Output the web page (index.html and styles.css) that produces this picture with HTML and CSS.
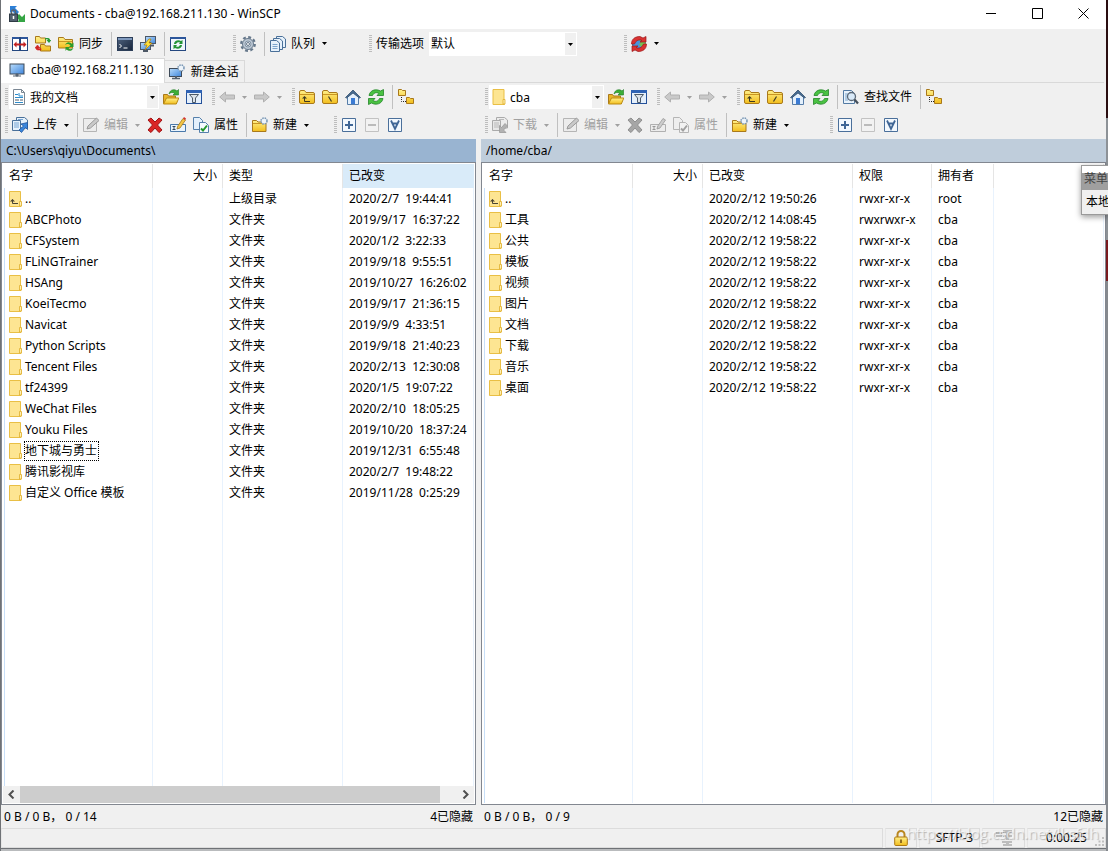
FILE: index.html
```html
<!DOCTYPE html>
<html lang="zh-CN">
<head>
<meta charset="utf-8">
<title>Documents - cba@192.168.211.130 - WinSCP</title>
<link rel="stylesheet" href="styles.css">
</head>
<body>
<svg class="defs" aria-hidden="true">
  <linearGradient id="gold" x1="0" y1="0" x2="0" y2="1"><stop offset="0" stop-color="#fff08a"/><stop offset="1" stop-color="#f2bd1c"/></linearGradient>
  <linearGradient id="screen" x1="0" y1="0" x2="1" y2="1"><stop offset="0" stop-color="#b9dcfb"/><stop offset="1" stop-color="#3f86dc"/></linearGradient>
  <linearGradient id="dark" x1="0" y1="0" x2="1" y2="1"><stop offset="0" stop-color="#50637f"/><stop offset="1" stop-color="#17243a"/></linearGradient>
  <symbol id="app" viewBox="0 0 16 16"><path d="M1 0h7L6 2l4 4-3 3-4-4-2 2z" fill="#2d7fd6"/><path d="M16 16H8l2-2-3-3 3-3 3 3 3-3z" fill="#35a545"/><path d="M2.500 8V6a2 2 0 0 1 4 0v2" fill="none" stroke="#59636e" stroke-width="1.500"/><rect x="0.500" y="8" width="8" height="7.500" fill="#52606f" stroke="#2f3a45"/><path d="M4.500 10v3" stroke="#fff" stroke-width="1.500"/></symbol>
  <symbol id="compare" viewBox="0 0 16 16"><rect x=".5" y="1.500" width="7" height="13" fill="#fff" stroke="#24477f"/><rect x="8.500" y="1.500" width="7" height="13" fill="#fff" stroke="#24477f"/><path d="M0 1h16v2H0z" fill="#2c569b"/><path d="M8 1v14" stroke="#24477f" stroke-width="2"/><path d="M1.500 8.500 4.500 5.500v2h7v-2L14.500 8.500 11.500 11.500V9.500h-7v2z" fill="#c22020"/></symbol>
  <symbol id="folder" viewBox="0 0 16 16"><path d="M.5 13V3q0-1.500 1.500-1.500h3.500l1.500 2h7q1.500 0 1.500 1.500v8q0 1.500-1.500 1.500H2q-1.500 0-1.500-1.500z" fill="url(#gold)" stroke="#a9791b"/><path d="M1 5.500h14" stroke="#c99523"/></symbol>
  <symbol id="syncdirs" viewBox="0 0 16 16"><path d="M.5 7V.5h4l1 1.500h5v5zM5.500 15V8.500h4L10.500 10h5v5z" fill="url(#gold)" stroke="#a9791b"/><path d="M10 2h3c1.500 0 2 1 2 2h1.500L14 7l-2.500-3H13c0-1-1-1-3-.5z" fill="#269a35"/><path d="M6 14H3c-1.500 0-2-1-2-2H0l2.500-3L5 12H3.500c0 1 1 1 2.500.5z" fill="#d02424" stroke="#d02424" stroke-width=".6"/></symbol>
  <symbol id="sync" viewBox="0 0 16 16"><path d="M.5 12V1.500h5l1.500 2h7.500V12z" fill="url(#gold)" stroke="#a9791b"/><path d="M1 5.500h13" stroke="#c99523"/><path d="M7 9c2-4 5-3 7-1l1.500-1.500V11H11l1.500-1.500C11 8 9 7.500 7 9zM15.500 12c-2 4-5 3-7 1.500L7.500 15v-4H12l-1.500 1.500c1.500 1 3 .8 5-.5z" fill="#2b9c2b"/></symbol>
  <symbol id="console" viewBox="0 0 16 16"><rect x=".5" y="1.500" width="15" height="13" fill="url(#dark)" stroke="#2c3e59"/><path d="M1 3h14" stroke="#7f99bd" stroke-width="2"/><path d="m2.500 8 2 2-2 2M6.500 12h4" fill="none" stroke="#fff"/></symbol>
  <symbol id="putty" viewBox="0 0 16 16"><rect x="5.500" y=".5" width="10" height="7" fill="url(#screen)" stroke="#4d5866"/><rect x=".5" y="6.500" width="10" height="7" fill="url(#screen)" stroke="#4d5866"/><path d="M3 15h5M10 9.500h4" stroke="#4d5866" stroke-width="2"/><path d="m9 3-5 6h3l-2 5 7-7H9l2-4z" fill="#ffe13b" stroke="#a97b10" stroke-width=".7"/></symbol>
  <symbol id="winsync" viewBox="0 0 16 16"><rect x=".5" y="1.500" width="15" height="13" fill="#eef5fd" stroke="#24477f"/><path d="M0 1h16v2H0z" fill="#2c569b"/><path d="M4 8c0-3 4-5 7-3l1.500-1v4H9l1-1.500C8.500 6 7 6 6 8zM12 9c0 3-4 5-7 3l-1.500 1V9H7l-1 1.500c1.500.5 3 .5 4-1.500z" fill="#249437"/></symbol>
  <symbol id="gear" viewBox="0 0 16 16"><circle cx="8" cy="8" r="6.800" fill="none" stroke="#66788b" stroke-width="2.200" stroke-dasharray="2.900 2.440"/><circle cx="8" cy="8" r="5.500" fill="#bcc8d4" stroke="#66788b"/><circle cx="8" cy="8" r="3" fill="#dfe6ed" stroke="#8494a5"/><circle cx="8" cy="8" r="1.500" fill="#fff" stroke="#66788b"/></symbol>
  <symbol id="queue" viewBox="0 0 16 16"><g fill="#e6f1fb" stroke="#4a7099"><path d="M6.500.5h6l3 2.500v8.500h-9z"/><path d="M3.500 2.500h6l3 2.500v8.500h-9z"/><path d="M.5 4.500h6l3 2.500v8.500h-9z"/></g><path d="M2.500 8.500h5M2.500 10.500h5M2.500 12.500h5" stroke="#7ca4cc"/></symbol>
  <symbol id="globe" viewBox="0 0 16 16"><circle cx="8" cy="8" r="6.500" fill="#4a94dc" stroke="#386595"/><path d="m6 5 4 0-2 4 4 3 3-5-3-3z" fill="#74bf54"/><path d="M.5 8C.5 3 4 .5 9 .5l3 1.500L15 .5V6H9l2-1.500C8 3 5 4.500 3.500 8z" fill="#d93232" stroke="#9c1818" stroke-width=".7"/><path d="M15.500 8c0 5-3.500 7.500-8.500 7.500L4 14l-3 1.500V10h6l-2 1.500c3 1.500 6 0 7.500-3.500z" fill="#d93232" stroke="#9c1818" stroke-width=".7"/></symbol>
  <symbol id="monitor" viewBox="0 0 16 16"><rect x="1" y="2" width="14" height="10" fill="url(#screen)" stroke="#3f4b59"/><path d="M7 12h2v2H7zM4 14h8" fill="#566270" stroke="#566270"/></symbol>
  <symbol id="newsession" viewBox="0 0 16 16"><rect x=".5" y="4.500" width="12" height="8" fill="url(#screen)" stroke="#3f4b59"/><path d="M6 13h2M3 14.500h8" stroke="#566270" stroke-width="1.500"/><circle cx="12" cy="4" r="3" fill="#eef4fa" stroke="#7896b4" stroke-width="1.500" stroke-dasharray="1.500 .9"/></symbol>
  <symbol id="docs" viewBox="0 0 16 16"><path d="M2.500.5h8l3 3v12h-11z" fill="#fff" stroke="#7b8793"/><path d="M10.500.5v3h3" fill="none" stroke="#7b8793"/><path d="M4 5.500h3M8 4v3h4M4 8.500h8M4 13.500h8" fill="none" stroke="#2d8ccc"/><path d="M4 11h4M9 11h3" stroke="#4a5a68"/></symbol>
  <symbol id="open" viewBox="0 0 16 16"><path d="M.5 14.500v-9h4l1 1.500h7v7.500z" fill="#e9b52a" stroke="#a9791b"/><path d="M.5 15 3.500 9h12.300l-2.500 6z" fill="url(#gold)" stroke="#b98912"/><path d="M6 5c1-5 6-5 8-3l1.500-1.500V6H10l1.500-1.500C10 3 8 3 6 5z" fill="#3cae37" stroke="#1d7b22" stroke-width=".6"/></symbol>
  <symbol id="filter" viewBox="0 0 16 16"><rect x=".5" y="1.500" width="15" height="13" fill="#e4effb" stroke="#24519a"/><path d="M0 1h16v3H0z" fill="#2e62b4"/><path d="M3.500 5.500h9L9.500 9v4.500h-3V9z" fill="#dbe2e9" stroke="#4c5a69"/></symbol>
  <symbol id="back" viewBox="0 0 16 16"><path d="M.7 8 6.500 3v3h9v4h-9v3z" fill="#c9c9c9" stroke="#b0b0b0"/></symbol>
  <symbol id="forward" viewBox="0 0 16 16"><path d="M15.300 8 9.500 3v3h-9v4h9v3z" fill="#c9c9c9" stroke="#b0b0b0"/></symbol>
  <symbol id="up" viewBox="0 0 16 16"><use href="#folder"/><path d="M5.500 8v4.500H11" fill="none" stroke="#3c3823"/><path d="M3 9.500 5.500 7 8 9.500z" fill="#3c3823"/></symbol>
  <symbol id="rootwin" viewBox="0 0 16 16"><use href="#folder"/><path d="m6.500 7.500 3 5" stroke="#3c3823" stroke-width="1.200"/></symbol>
  <symbol id="rootunix" viewBox="0 0 16 16"><use href="#folder"/><path d="m9.500 7.500-3 5" stroke="#3c3823" stroke-width="1.200"/></symbol>
  <symbol id="home" viewBox="0 0 16 16"><path d="M2.500 8v7.500h11V8L8 2.500z" fill="#e4f0fc" stroke="#567da8"/><path d="M.5 8.500 8 1l7.500 7.500-1 .5L8 4 1.500 9z" fill="#476b91" stroke="#34516f" stroke-width=".8"/><path d="M6 9h4v6H6z" fill="#3b7bd3"/></symbol>
  <symbol id="refresh" viewBox="0 0 16 16"><path d="M1 6.500C2 1 8-.5 12.500 2L15.500.5v6H9l2-2C8.500 3 6 3.500 4.500 6.500zM15 9.500c-1 5.500-7 7-11.500 4.500l-3 1.500v-6H7l-2 2c2.500 1.500 5 1 6.500-2z" fill="#4ac242" stroke="#23842a" stroke-width=".8"/></symbol>
  <symbol id="tree" viewBox="0 0 16 16"><path d="M.5 6.500v-6h3l1 1h3v5zM8.500 14.500v-6h3l1 1h3v5z" fill="url(#gold)" stroke="#a9791b"/><path d="M3.500 8v4.500H8" fill="none" stroke="#222" stroke-dasharray="1 1"/></symbol>
  <symbol id="upload" viewBox="0 0 16 16"><path d="M4.500.5h8l3 2.500v8h-11z" fill="#e6f1fb" stroke="#4a7099"/><path d="M.5 3.500h8v10h-8z" fill="#e6f1fb" stroke="#4a7099"/><path d="M2 6h5M2 8h5M2 10h5M6 2.500h5" stroke="#76a4d2"/><path d="M15.500 5.500v7l-2-2-4 5-2.500-2.500 4.500-4-2.500-2z" fill="#3a86dc" stroke="#1f539b" stroke-width=".8"/></symbol>
  <symbol id="download" viewBox="0 0 16 16"><path d="M4.500.5h8l3 2.500v8h-11z" fill="#ececec" stroke="#aaa"/><path d="M.5 3.500h8v10h-8z" fill="#e7e7e7" stroke="#aaa"/><path d="M2 6h5M2 8h5M2 10h5M7 2.500h5" stroke="#b9b9b9"/><path d="M7.500 15.500v-7l2 2L13 6.500 15.500 9l-4 4 2.500 2.500z" fill="#b2b2b2" stroke="#999" stroke-width=".8"/></symbol>
  <symbol id="edit" viewBox="0 0 16 16"><path d="M.5 1.500h13v13H.5z" fill="#ececec" stroke="#b5b5b5"/><path d="m4 12 1-3 8.500-8L16 3.500 7.500 11z" fill="#c9c9c9" stroke="#999"/></symbol>
  <symbol id="delete" viewBox="0 0 16 16"><path d="M4 1 8 5l4-4 3 2-4.500 5 4.500 5-3 2.500-4-4.500-4 4.500L1 13l4.500-5L1 3z" fill="#d92626" stroke="#a11313"/></symbol>
  <symbol id="deleteoff" viewBox="0 0 16 16"><path d="M4 1 8 5l4-4 3 2-4.500 5 4.500 5-3 2.500-4-4.500-4 4.500L1 13l4.500-5L1 3z" fill="#a6a6a6" stroke="#8f8f8f"/></symbol>
  <symbol id="rename" viewBox="0 0 16 16"><path d="M.5 7.500h15v7H.5z" fill="#eaf4fd" stroke="#4a79aa"/><path d="M2.500 9.500h3M2.500 12.500h3M4 9.500v3" stroke="#33475c"/><path d="m7 12 .8-3L13 1.500l2.500 1.500L10 11z" fill="#f4c545" stroke="#a3781d" stroke-width=".8"/><path d="M13 1.500 14 0l2 1.500-.8 1.500z" fill="#d43232"/></symbol>
  <symbol id="renameoff" viewBox="0 0 16 16"><path d="M.5 7.500h15v7H.5z" fill="#ececec" stroke="#b0b0b0"/><path d="M2.500 9.500h3M2.500 12.500h3M4 9.500v3" stroke="#999"/><path d="m7 12 .8-3L13 1.500l2.500 1.500L10 11z" fill="#ccc" stroke="#999" stroke-width=".8"/></symbol>
  <symbol id="props" viewBox="0 0 16 16"><path d="M.5.5h6l3 3v9h-9z" fill="#e4f0fb" stroke="#5580ab"/><path d="M6.500 5.500h6l3 3v7h-9z" fill="#f5faff" stroke="#5580ab"/><path d="m8 11.500 2 2 4-5" fill="none" stroke="#23962b" stroke-width="2"/></symbol>
  <symbol id="propsoff" viewBox="0 0 16 16"><path d="M.5.5h6l3 3v9h-9z" fill="#eee" stroke="#b5b5b5"/><path d="M6.500 5.500h6l3 3v7h-9z" fill="#f2f2f2" stroke="#b5b5b5"/><path d="m8 11.500 2 2 4-5" fill="none" stroke="#a0a0a0" stroke-width="2"/></symbol>
  <symbol id="newdir" viewBox="0 0 16 16"><path d="M.5 14.500v-11h4L6 5h8v9.500z" fill="url(#gold)" stroke="#a9791b"/><path d="M1 6.500h12.500" stroke="#c99523"/><circle cx="12" cy="4" r="3" fill="#eef4fa" stroke="#7896b4" stroke-width="1.500" stroke-dasharray="1.500 .9"/></symbol>
  <symbol id="plus" viewBox="0 0 16 16"><path d="M1.500 1.500h13v13h-13z" fill="#f2f8fe" stroke="#4a6f9a"/><path d="M4 8h8M8 4v8" stroke="#3f6696" stroke-width="2"/></symbol>
  <symbol id="minus" viewBox="0 0 16 16"><path d="M1.500 1.500h13v13h-13z" fill="#f2f2f2" stroke="#c2c2c2"/><path d="M4 8h8" stroke="#bbb" stroke-width="2"/></symbol>
  <symbol id="invert" viewBox="0 0 16 16"><path d="M1.500 1.500h13v13h-13z" fill="#f2f8fe" stroke="#4a6f9a"/><path d="M4 3.500l4 8.500 4-8.500M5 6.500h6" fill="none" stroke="#3f6696" stroke-width="1.800"/></symbol>
  <symbol id="find" viewBox="0 0 16 16"><path d="M.5 1.500h8l3 3v10H.5z" fill="#e8f2fb" stroke="#527aa3"/><path d="M2 5h3M2 7h2M2 9h2M2 11h3" stroke="#7ba5cd"/><circle cx="8.500" cy="7.500" r="4" fill="#d8e9f8" stroke="#5a6876" stroke-width="1.300"/><path d="m11.500 10.500 3.500 4" stroke="#454f5a" stroke-width="2.200"/></symbol>
  <symbol id="dir" viewBox="0 0 13 16"><path d="M.5.5h11V11l.5.5v4H.5z" fill="#fde592" stroke="#e9bf45"/><path d="M10.500 15v-4.500h2V15z" fill="#fff0b4" stroke="#e0ae2c" stroke-width=".8"/></symbol>
  <symbol id="dirup" viewBox="0 0 13 16"><use href="#dir"/><path d="M3.500 8.500v4H9" fill="none" stroke="#4a4432"/><path d="M1 10.500 3.500 8 6 10.500z" fill="#4a4432"/></symbol>
  <symbol id="lock" viewBox="0 0 14 16"><path d="M3.500 8V4.500a3.500 3.500 0 0 1 7 0V8" fill="none" stroke="#b98720" stroke-width="2"/><rect x=".7" y="7" width="12.600" height="8.500" rx="1" fill="url(#gold)" stroke="#ad7914"/><path d="M7 9.500v3.500" stroke="#6c4910" stroke-width="1.500"/></symbol>
  <symbol id="zip" viewBox="0 0 16 16"><path d="M0 2h6v2H0zM0 5h6v2H0zM7 0h9v3h-3v2h3v2h-3v3h-3V7H7V5h3V3H7zM6 11h10v2h-3v1h3v2H7v-2h3v-1H6z" fill="#bdbdbd"/></symbol>
  <symbol id="caret" viewBox="0 0 5 3"><path d="M0 0h5L2.500 3z" fill="currentColor"/></symbol>
</svg>

<div class="window">
  <header class="titlebar">
    <svg class="ico"><use href="#app"/></svg>
    <h1 class="title">Documents - cba@192.168.211.130 - WinSCP</h1>
    <button class="winbtn" aria-label="最小化"><svg viewBox="0 0 11 11"><path d="M0 5.500h10"/></svg></button>
    <button class="winbtn" aria-label="最大化"><svg viewBox="0 0 11 11"><path d="M.5.5h10v10H.5z"/></svg></button>
    <button class="winbtn" aria-label="关闭"><svg viewBox="0 0 11 11"><path d="m.5.5 10 10M10.500.5l-10 10"/></svg></button>
  </header>

  <div class="toolbar main-tools">
    <div class="group">
      <span class="grip"></span>
      <button class="tool" aria-label="比较目录"><svg class="ico"><use href="#compare"/></svg></button>
      <button class="tool" aria-label="同步浏览"><svg class="ico"><use href="#syncdirs"/></svg></button>
      <button class="tool"><svg class="ico"><use href="#sync"/></svg>同步</button>
      <span class="sep"></span>
      <button class="tool" aria-label="终端"><svg class="ico"><use href="#console"/></svg></button>
      <button class="tool" aria-label="PuTTY"><svg class="ico"><use href="#putty"/></svg></button>
      <span class="sep"></span>
      <button class="tool" aria-label="保持更新"><svg class="ico"><use href="#winsync"/></svg></button>
    </div>
    <div class="group">
      <span class="grip"></span>
      <button class="tool" aria-label="选项"><svg class="ico"><use href="#gear"/></svg></button>
      <span class="sep"></span>
      <button class="tool"><svg class="ico"><use href="#queue"/></svg>队列<svg class="caret"><use href="#caret"/></svg></button>
    </div>
    <div class="group">
      <span class="grip"></span>
      <label class="tool-label" for="preset">传输选项</label>
      <span class="combo combo-preset"><select id="preset"><option>默认</option></select><svg class="caret"><use href="#caret"/></svg></span>
    </div>
    <div class="group">
      <span class="grip"></span>
      <button class="tool" aria-label="重新连接"><svg class="ico"><use href="#globe"/></svg><svg class="caret"><use href="#caret"/></svg></button>
    </div>
  </div>

  <nav class="tabs">
    <button class="tab active"><svg class="ico"><use href="#monitor"/></svg>cba@192.168.211.130</button>
    <button class="tab"><svg class="ico"><use href="#newsession"/></svg>新建会话</button>
  </nav>

  <div class="panes">
    <section class="pane">
      <div class="toolbar nav-tools local-nav">
        <div class="group">
          <span class="grip"></span>
          <span class="combo combo-dir"><svg class="ico"><use href="#docs"/></svg><select aria-label="本地目录"><option>我的文档</option></select><svg class="caret"><use href="#caret"/></svg></span>
          <button class="tool" aria-label="打开目录"><svg class="ico"><use href="#open"/></svg></button>
          <button class="tool" aria-label="过滤"><svg class="ico"><use href="#filter"/></svg></button>
        </div>
        <div class="group">
          <span class="grip"></span>
          <button class="tool" disabled aria-label="后退"><svg class="ico"><use href="#back"/></svg><svg class="caret"><use href="#caret"/></svg></button>
          <button class="tool" disabled aria-label="前进"><svg class="ico"><use href="#forward"/></svg><svg class="caret"><use href="#caret"/></svg></button>
        </div>
        <div class="group">
          <span class="grip"></span>
          <button class="tool" aria-label="上级目录"><svg class="ico"><use href="#up"/></svg></button>
          <button class="tool" aria-label="根目录"><svg class="ico"><use href="#rootwin"/></svg></button>
          <button class="tool" aria-label="主目录"><svg class="ico"><use href="#home"/></svg></button>
          <button class="tool" aria-label="刷新"><svg class="ico"><use href="#refresh"/></svg></button>
          <span class="sep"></span>
          <button class="tool" aria-label="目录树"><svg class="ico"><use href="#tree"/></svg></button>
        </div>
      </div>
      <div class="toolbar file-tools local-file">
        <div class="group">
          <span class="grip"></span>
          <button class="tool"><svg class="ico"><use href="#upload"/></svg>上传<svg class="caret"><use href="#caret"/></svg></button>
          <span class="sep"></span>
          <button class="tool" disabled><svg class="ico"><use href="#edit"/></svg>编辑<svg class="caret"><use href="#caret"/></svg></button>
          <button class="tool" aria-label="删除"><svg class="ico"><use href="#delete"/></svg></button>
          <button class="tool" aria-label="重命名"><svg class="ico"><use href="#rename"/></svg></button>
          <button class="tool"><svg class="ico"><use href="#props"/></svg>属性</button>
          <span class="sep"></span>
          <button class="tool"><svg class="ico"><use href="#newdir"/></svg>新建<svg class="caret"><use href="#caret"/></svg></button>
        </div>
        <div class="group">
          <span class="grip"></span>
          <button class="tool" aria-label="选择文件"><svg class="ico"><use href="#plus"/></svg></button>
          <button class="tool" disabled aria-label="取消选择"><svg class="ico"><use href="#minus"/></svg></button>
          <button class="tool" aria-label="反向选择"><svg class="ico"><use href="#invert"/></svg></button>
        </div>
      </div>
      <div class="path active">C:\Users\qiyu\Documents\</div>
      <div class="list">
        <div class="list-body">
          <table class="files">
            <colgroup><col class="w-name-l"><col class="w-size"><col class="w-type"><col class="w-date-l"></colgroup>
            <thead><tr><th>名字</th><th class="num">大小</th><th>类型</th><th class="sorted">已改变</th></tr></thead>
            <tbody>
              <tr><td><span class="name"><svg class="dir"><use href="#dirup"/></svg>..</span></td><td></td><td>上级目录</td><td>2020/2/7&nbsp; 19:44:41</td></tr>
              <tr><td><span class="name"><svg class="dir"><use href="#dir"/></svg>ABCPhoto</span></td><td></td><td>文件夹</td><td>2019/9/17&nbsp; 16:37:22</td></tr>
              <tr><td><span class="name"><svg class="dir"><use href="#dir"/></svg>CFSystem</span></td><td></td><td>文件夹</td><td>2020/1/2&nbsp; 3:22:33</td></tr>
              <tr><td><span class="name"><svg class="dir"><use href="#dir"/></svg>FLiNGTrainer</span></td><td></td><td>文件夹</td><td>2019/9/18&nbsp; 9:55:51</td></tr>
              <tr><td><span class="name"><svg class="dir"><use href="#dir"/></svg>HSAng</span></td><td></td><td>文件夹</td><td>2019/10/27&nbsp; 16:26:02</td></tr>
              <tr><td><span class="name"><svg class="dir"><use href="#dir"/></svg>KoeiTecmo</span></td><td></td><td>文件夹</td><td>2019/9/17&nbsp; 21:36:15</td></tr>
              <tr><td><span class="name"><svg class="dir"><use href="#dir"/></svg>Navicat</span></td><td></td><td>文件夹</td><td>2019/9/9&nbsp; 4:33:51</td></tr>
              <tr><td><span class="name"><svg class="dir"><use href="#dir"/></svg>Python Scripts</span></td><td></td><td>文件夹</td><td>2019/9/18&nbsp; 21:40:23</td></tr>
              <tr><td><span class="name"><svg class="dir"><use href="#dir"/></svg>Tencent Files</span></td><td></td><td>文件夹</td><td>2020/2/13&nbsp; 12:30:08</td></tr>
              <tr><td><span class="name"><svg class="dir"><use href="#dir"/></svg>tf24399</span></td><td></td><td>文件夹</td><td>2020/1/5&nbsp; 19:07:22</td></tr>
              <tr><td><span class="name"><svg class="dir"><use href="#dir"/></svg>WeChat Files</span></td><td></td><td>文件夹</td><td>2020/2/10&nbsp; 18:05:25</td></tr>
              <tr><td><span class="name"><svg class="dir"><use href="#dir"/></svg>Youku Files</span></td><td></td><td>文件夹</td><td>2019/10/20&nbsp; 18:37:24</td></tr>
              <tr><td><span class="name"><svg class="dir"><use href="#dir"/></svg><span class="focus">地下城与勇士</span></span></td><td></td><td>文件夹</td><td>2019/12/31&nbsp; 6:55:48</td></tr>
              <tr><td><span class="name"><svg class="dir"><use href="#dir"/></svg>腾讯影视库</span></td><td></td><td>文件夹</td><td>2020/2/7&nbsp; 19:48:22</td></tr>
              <tr><td><span class="name"><svg class="dir"><use href="#dir"/></svg>自定义 Office 模板</span></td><td></td><td>文件夹</td><td>2019/11/28&nbsp; 0:25:29</td></tr>
              <tr class="fill"><td></td><td></td><td></td><td></td></tr>
            </tbody>
          </table>
        </div>
        <div class="scrollbar">
          <button class="scroll-btn" aria-label="向左滚动"><svg viewBox="0 0 7 9"><path d="M5.500.5l-4 4 4 4"/></svg></button>
          <div class="track"><div class="thumb"></div></div>
          <button class="scroll-btn" aria-label="向右滚动"><svg viewBox="0 0 7 9"><path d="M1.500.5l4 4-4 4"/></svg></button>
        </div>
      </div>
      <div class="summary"><span>0 B / 0 B，&nbsp;0 / 14</span><span>4已隐藏</span></div>
    </section>

    <section class="pane">
      <div class="toolbar nav-tools remote-nav">
        <div class="group">
          <span class="grip"></span>
          <span class="combo combo-remote"><svg class="ico"><use href="#dir"/></svg><select aria-label="远程目录"><option>cba</option></select><svg class="caret"><use href="#caret"/></svg></span>
          <button class="tool" aria-label="打开目录"><svg class="ico"><use href="#open"/></svg></button>
          <button class="tool" aria-label="过滤"><svg class="ico"><use href="#filter"/></svg></button>
        </div>
        <div class="group">
          <span class="grip"></span>
          <button class="tool" disabled aria-label="后退"><svg class="ico"><use href="#back"/></svg><svg class="caret"><use href="#caret"/></svg></button>
          <button class="tool" disabled aria-label="前进"><svg class="ico"><use href="#forward"/></svg><svg class="caret"><use href="#caret"/></svg></button>
        </div>
        <div class="group">
          <span class="grip"></span>
          <button class="tool" aria-label="上级目录"><svg class="ico"><use href="#up"/></svg></button>
          <button class="tool" aria-label="根目录"><svg class="ico"><use href="#rootunix"/></svg></button>
          <button class="tool" aria-label="主目录"><svg class="ico"><use href="#home"/></svg></button>
          <button class="tool" aria-label="刷新"><svg class="ico"><use href="#refresh"/></svg></button>
          <span class="sep"></span>
          <button class="tool"><svg class="ico"><use href="#find"/></svg>查找文件</button>
          <span class="sep"></span>
          <button class="tool" aria-label="目录树"><svg class="ico"><use href="#tree"/></svg></button>
        </div>
      </div>
      <div class="toolbar file-tools remote-file">
        <div class="group">
          <span class="grip"></span>
          <button class="tool" disabled><svg class="ico"><use href="#download"/></svg>下载<svg class="caret"><use href="#caret"/></svg></button>
          <span class="sep"></span>
          <button class="tool" disabled><svg class="ico"><use href="#edit"/></svg>编辑<svg class="caret"><use href="#caret"/></svg></button>
          <button class="tool" disabled aria-label="删除"><svg class="ico"><use href="#deleteoff"/></svg></button>
          <button class="tool" disabled aria-label="重命名"><svg class="ico"><use href="#renameoff"/></svg></button>
          <button class="tool" disabled><svg class="ico"><use href="#propsoff"/></svg>属性</button>
          <span class="sep"></span>
          <button class="tool"><svg class="ico"><use href="#newdir"/></svg>新建<svg class="caret"><use href="#caret"/></svg></button>
        </div>
        <div class="group">
          <span class="grip"></span>
          <button class="tool" aria-label="选择文件"><svg class="ico"><use href="#plus"/></svg></button>
          <button class="tool" disabled aria-label="取消选择"><svg class="ico"><use href="#minus"/></svg></button>
          <button class="tool" aria-label="反向选择"><svg class="ico"><use href="#invert"/></svg></button>
        </div>
      </div>
      <div class="path">/home/cba/</div>
      <div class="list">
        <div class="list-body">
          <table class="files">
            <colgroup><col class="w-name-r"><col class="w-size"><col class="w-date-r"><col class="w-rights"><col class="w-owner"><col></colgroup>
            <thead><tr><th>名字</th><th class="num">大小</th><th>已改变</th><th>权限</th><th>拥有者</th><th></th></tr></thead>
            <tbody>
              <tr><td><span class="name"><svg class="dir"><use href="#dirup"/></svg>..</span></td><td></td><td>2020/2/12 19:50:26</td><td>rwxr-xr-x</td><td>root</td><td></td></tr>
              <tr><td><span class="name"><svg class="dir"><use href="#dir"/></svg>工具</span></td><td></td><td>2020/2/12 14:08:45</td><td>rwxrwxr-x</td><td>cba</td><td></td></tr>
              <tr><td><span class="name"><svg class="dir"><use href="#dir"/></svg>公共</span></td><td></td><td>2020/2/12 19:58:22</td><td>rwxr-xr-x</td><td>cba</td><td></td></tr>
              <tr><td><span class="name"><svg class="dir"><use href="#dir"/></svg>模板</span></td><td></td><td>2020/2/12 19:58:22</td><td>rwxr-xr-x</td><td>cba</td><td></td></tr>
              <tr><td><span class="name"><svg class="dir"><use href="#dir"/></svg>视频</span></td><td></td><td>2020/2/12 19:58:22</td><td>rwxr-xr-x</td><td>cba</td><td></td></tr>
              <tr><td><span class="name"><svg class="dir"><use href="#dir"/></svg>图片</span></td><td></td><td>2020/2/12 19:58:22</td><td>rwxr-xr-x</td><td>cba</td><td></td></tr>
              <tr><td><span class="name"><svg class="dir"><use href="#dir"/></svg>文档</span></td><td></td><td>2020/2/12 19:58:22</td><td>rwxr-xr-x</td><td>cba</td><td></td></tr>
              <tr><td><span class="name"><svg class="dir"><use href="#dir"/></svg>下载</span></td><td></td><td>2020/2/12 19:58:22</td><td>rwxr-xr-x</td><td>cba</td><td></td></tr>
              <tr><td><span class="name"><svg class="dir"><use href="#dir"/></svg>音乐</span></td><td></td><td>2020/2/12 19:58:22</td><td>rwxr-xr-x</td><td>cba</td><td></td></tr>
              <tr><td><span class="name"><svg class="dir"><use href="#dir"/></svg>桌面</span></td><td></td><td>2020/2/12 19:58:22</td><td>rwxr-xr-x</td><td>cba</td><td></td></tr>
              <tr class="fill"><td></td><td></td><td></td><td></td><td></td><td></td></tr>
            </tbody>
          </table>
        </div>
      </div>
      <div class="summary"><span>0 B / 0 B，&nbsp;0 / 9</span><span>12已隐藏</span></div>
    </section>
  </div>

  <footer class="statusbar">
    <span class="cell"></span>
    <span class="cell"><svg class="lock"><use href="#lock"/></svg></span>
    <span class="cell">SFTP-3</span>
    <span class="cell"><svg class="ico"><use href="#zip"/></svg></span>
    <span class="cell">0:00:25</span>
  </footer>
  <div class="watermark">https://blog.csdn.net/lksfdh</div>
  <svg class="resize" viewBox="0 0 9 9"><path d="M7 0h2v2H7zM7 3.500h2v2H7zM7 7h2v2H7zM3.500 3.500h2v2h-2zM3.500 7h2v2h-2zM0 7h2v2H0z"/></svg>
</div>
<aside class="popup"><div class="popup-title">菜单</div><div class="popup-item">本地</div></aside>
</body>
</html>
```
FILE: styles.css
```css
* { box-sizing: border-box; }

body {
  margin: 0;
  height: 100vh;
  padding: 0 2px 2px 1px;
  overflow: hidden;
  position: relative;
  background:
    linear-gradient(#2a0d10 0 118px, #8d9297 118px 240px, #7a1a20 240px 281px, #85898e 281px) right / 2px 100% no-repeat,
    linear-gradient(90deg, #6f7276 0 1px, #b9bbbd 1px);
  font: 12px/16px "Noto Sans", "Noto Sans CJK SC", sans-serif;
  color: #000;
}

button, select { font: inherit; color: inherit; border: 0; background: none; padding: 0; margin: 0; border-radius: 0; }
.defs { position: absolute; width: 0; height: 0; }
.ico { width: 16px; height: 16px; flex: none; }
.caret { width: 5px; height: 3px; flex: none; }

.window { height: 100%; display: flex; flex-direction: column; background: #f0f0f0; position: relative; border-bottom: 1px solid #6f7276; }

.titlebar { display: flex; align-items: center; height: 29px; padding-left: 8px; background: #fff; flex: none; padding-bottom: 2px; }
.title { flex: 1; margin: 0 0 0 5px; font-size: 12px; font-weight: normal; }
.winbtn { width: 46px; height: 27px; display: grid; place-items: center; }
.winbtn svg { width: 11px; height: 11px; fill: none; stroke: #000; }

.toolbar { display: grid; flex: none; height: 28px; padding-left: 4px; align-items: stretch; }
.group { display: flex; align-items: center; }
.grip { width: 3px; height: 18px; margin-right: 1px; background: repeating-linear-gradient(#bdbdbd 0 1px, #f0f0f0 1px 2px); }
.sep { width: 1px; height: 24px; margin: 0 2px 0 4px; background: #c0c0c0; }
.tool { display: flex; align-items: center; gap: 5px; height: 24px; padding: 0 4px 0 3px; white-space: nowrap; }
.tool .caret { margin-left: 2px; }
.tool:disabled { color: #a0a0a0; }
.tool-label { padding: 0 5px 0 3px; }
.combo { display: flex; align-items: center; background: #fff; height: 24px; flex: none; }
.combo .ico { margin-left: 2px; }
.combo select { appearance: none; flex: 1; align-self: stretch; min-width: 0; padding: 1px 0 0 3px; }
.combo .caret { box-sizing: content-box; padding: 10px 3px 9px; background: #f0f0f0; margin-right: 1px; }
.combo-preset { width: 148px; }
.combo-preset select { padding: 0 0 0 2px; }
.combo-dir { width: 150px; margin-right: 1px; }
.combo-remote { width: 115px; margin-right: 1px; }

.main-tools { height: 29px; grid-template-columns: 228px 136px 255px 1fr; }
.local-nav { grid-template-columns: 207px 80px 1fr; }
.remote-nav { grid-template-columns: 172px 80px 1fr; }
.local-file { grid-template-columns: 329px 1fr; }
.remote-file { grid-template-columns: 345px 1fr; }

.tabs { display: flex; align-items: flex-end; flex: none; height: 25px; }
.tabs::after { content: ""; flex: 1; border-bottom: 1px solid #d9d9d9; margin-right: 2px; }
.tab { display: flex; align-items: center; gap: 6px; height: 23px; padding: 0 5px 0 4px; border: 1px solid #d9d9d9; border-left: 0; white-space: nowrap; }
.tab.active { height: 25px; padding: 0 10px 2px 8px; background: #fff; border-bottom: 0; }

.panes { flex: 1; min-height: 0; display: grid; grid-template-columns: 475px minmax(0, 1fr); column-gap: 5px; }
.pane { display: flex; flex-direction: column; min-width: 0; min-height: 0; }
.path { height: 23px; flex: none; padding: 4px 5px 3px; background: #bfcddb; }
.path.active { background: #99b4d1; }
.list { flex: 1; min-height: 0; display: flex; flex-direction: column; background: #fff; border: 1px solid #828790; padding: 1px; }
.list-body { flex: 1; min-height: 0; display: grid; overflow: hidden; padding-left: 1px; }

.files { width: 100%; height: 100%; table-layout: fixed; border-collapse: separate; border-spacing: 0; }
.files th, .files td { padding: 0 5px 0 6px; text-align: left; font-weight: normal; white-space: nowrap; }
.files th { height: 24px; border-right: 1px solid #e5e5e5; }
.files td { height: 21px; border-right: 1px solid #e8f2fd; }
.files th:first-child { padding-left: 5px; }
.files td:first-child { padding-left: 4px; border-left: 1px solid #c8dff8; }
.files tr > :last-child { padding-right: 0; }
.files th.num { text-align: right; }
.files th.sorted { background: #d9ebf9; border-right-color: #d9ebf9; }
.files tr.fill td { height: auto; }
.w-name-l { width: 149px; }
.w-name-r { width: 149px; }
.w-size { width: 70px; }
.w-type { width: 120px; }
.w-date-r { width: 150px; }
.w-rights { width: 79px; }
.w-owner { width: 62px; }
.name { display: flex; align-items: center; gap: 3px; }
.dir { width: 13px; height: 16px; flex: none; }
.focus { outline: 1px dotted #000; padding: 1px 1px 1px 0; }

.scrollbar { display: flex; height: 17px; flex: none; background: #f0f0f0; }
.scroll-btn { width: 17px; display: grid; place-items: center; }
.scroll-btn svg { width: 7px; height: 9px; fill: none; stroke: #505050; stroke-width: 2; }
.track { flex: 1; display: flex; }
.thumb { width: 96%; background: #cdcdcd; }

.summary { height: 23px; flex: none; display: flex; justify-content: space-between; align-items: center; padding: 1px 3px 0 3px; }

.statusbar { flex: none; height: 20px; display: grid; grid-template-columns: 1fr 32px 61px 43px 79px; gap: 2px; }
.cell { border: 1px solid #dcdcdc; border-left-color: #e6e6e6; display: flex; align-items: center; justify-content: center; }
.cell:nth-child(3) { padding-left: 10px; }
.lock { width: 14px; height: 16px; }
.watermark { position: absolute; right: 7px; bottom: 4px; font: 15px/22px "Open Sans", sans-serif; color: rgba(255, 255, 255, 0.6); text-shadow: 1px 1px 1px rgba(110, 110, 110, 0.45); pointer-events: none; }
.resize { position: absolute; right: 2px; bottom: 2px; width: 9px; height: 9px; fill: #bfbfbf; }

.popup { position: absolute; left: 1081px; right: 0; top: 165px; overflow: hidden; white-space: nowrap; border: 1px solid #9a9a9a; border-right: 0; background: #f0f0f0; box-shadow: 0 2px 6px rgba(0, 0, 0, 0.4); }
.popup-title { border-top: 7px solid #fff; height: 24px; line-height: 12px; padding-left: 2px; background: #9f9f9f; color: #444; }
.popup-item { height: 24px; line-height: 24px; padding-left: 4px; }
```
